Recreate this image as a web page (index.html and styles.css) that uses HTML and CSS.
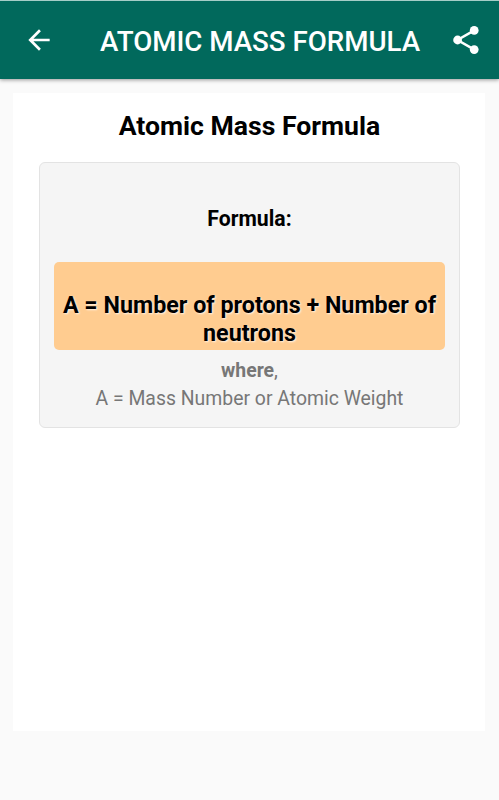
FILE: index.html
```html
<!DOCTYPE html>
<html lang="en">
<head>
  <meta charset="UTF-8">
  <meta name="viewport" content="width=device-width, initial-scale=1.0">
  <title>Atomic Mass Formula</title>
  <link rel="stylesheet" href="styles.css">
</head>
<body>
<header class="toolbar">
  <svg class="back" viewBox="0 0 24 24"><path d="M20 11H7.83l5.59-5.59L12 4l-8 8 8 8 1.41-1.41L7.83 13H20z"/></svg>
  <h1>ATOMIC MASS FORMULA</h1>
  <svg class="share" viewBox="0 0 32 32">
    <path d="M24.3 6.3L7.5 16l16.8 9.7" fill="none" stroke="#fff" stroke-width="2.5"/>
    <circle cx="24.2" cy="6.4" r="4.4"/>
    <circle cx="7.6" cy="16" r="4.4"/>
    <circle cx="24.2" cy="25.6" r="4.4"/>
  </svg>
</header>
<main class="container">
  <h2>Atomic Mass Formula</h2>
  <div class="well">
    <h3>Formula:</h3>
    <div class="formula">A = Number of protons + Number of neutrons</div>
    <p><b>where</b>,<br>A = Mass Number or Atomic Weight</p>
  </div>
</main>
</body>
</html>
```
FILE: styles.css
```css
* {
  box-sizing: border-box;
}
body {
  margin: 0;
  background-color: #fafafa;
  color: #000;
  font-family: Roboto, sans-serif;
}
.toolbar {
  display: flex;
  align-items: center;
  height: 79px;
  padding: 1px 17px 0 23px;
  border-top: 1px solid #a5cdc7;
  background-color: #01695c;
  box-shadow: 0 1px 4px rgba(0, 0, 0, 0.4);
}
.toolbar svg {
  flex: none;
  width: 32px;
  height: 32px;
  fill: #fff;
}
.toolbar .back {
  margin-top: -1px;
}
.toolbar .share {
  margin-top: -2px;
}
.toolbar h1 {
  flex: 1;
  margin: 1px 0 0 45px;
  color: #fff;
  font-size: 27.7px;
  font-weight: 500;
  white-space: nowrap;
}
.container {
  height: 638px;
  margin: 14px 14px 0 13px;
  padding: 16px 25px 0 26px;
  background-color: #fff;
  text-align: center;
}
h2 {
  margin: 0;
  font-size: 26.6px;
  font-weight: 700;
  line-height: 34px;
}
.well {
  height: 266px;
  margin-top: 19px;
  padding: 42px 14px 0;
  border: 1px solid #e3e3e3;
  border-radius: 6px;
  background-color: #f5f5f5;
}
h3 {
  margin: 0;
  font-size: 21.2px;
  font-weight: 700;
  line-height: 28px;
}
.formula {
  height: 88px;
  margin-top: 29px;
  padding-top: 29px;
  border-radius: 5px;
  background-color: #ffcc90;
  font-size: 23.3px;
  font-weight: 700;
  line-height: 28px;
  text-shadow: 1px 1px 2px rgba(255, 255, 255, 0.8);
}
.well p {
  margin: 7px 0 0;
  color: #777;
  font-size: 19.4px;
  line-height: 28px;
}
```
